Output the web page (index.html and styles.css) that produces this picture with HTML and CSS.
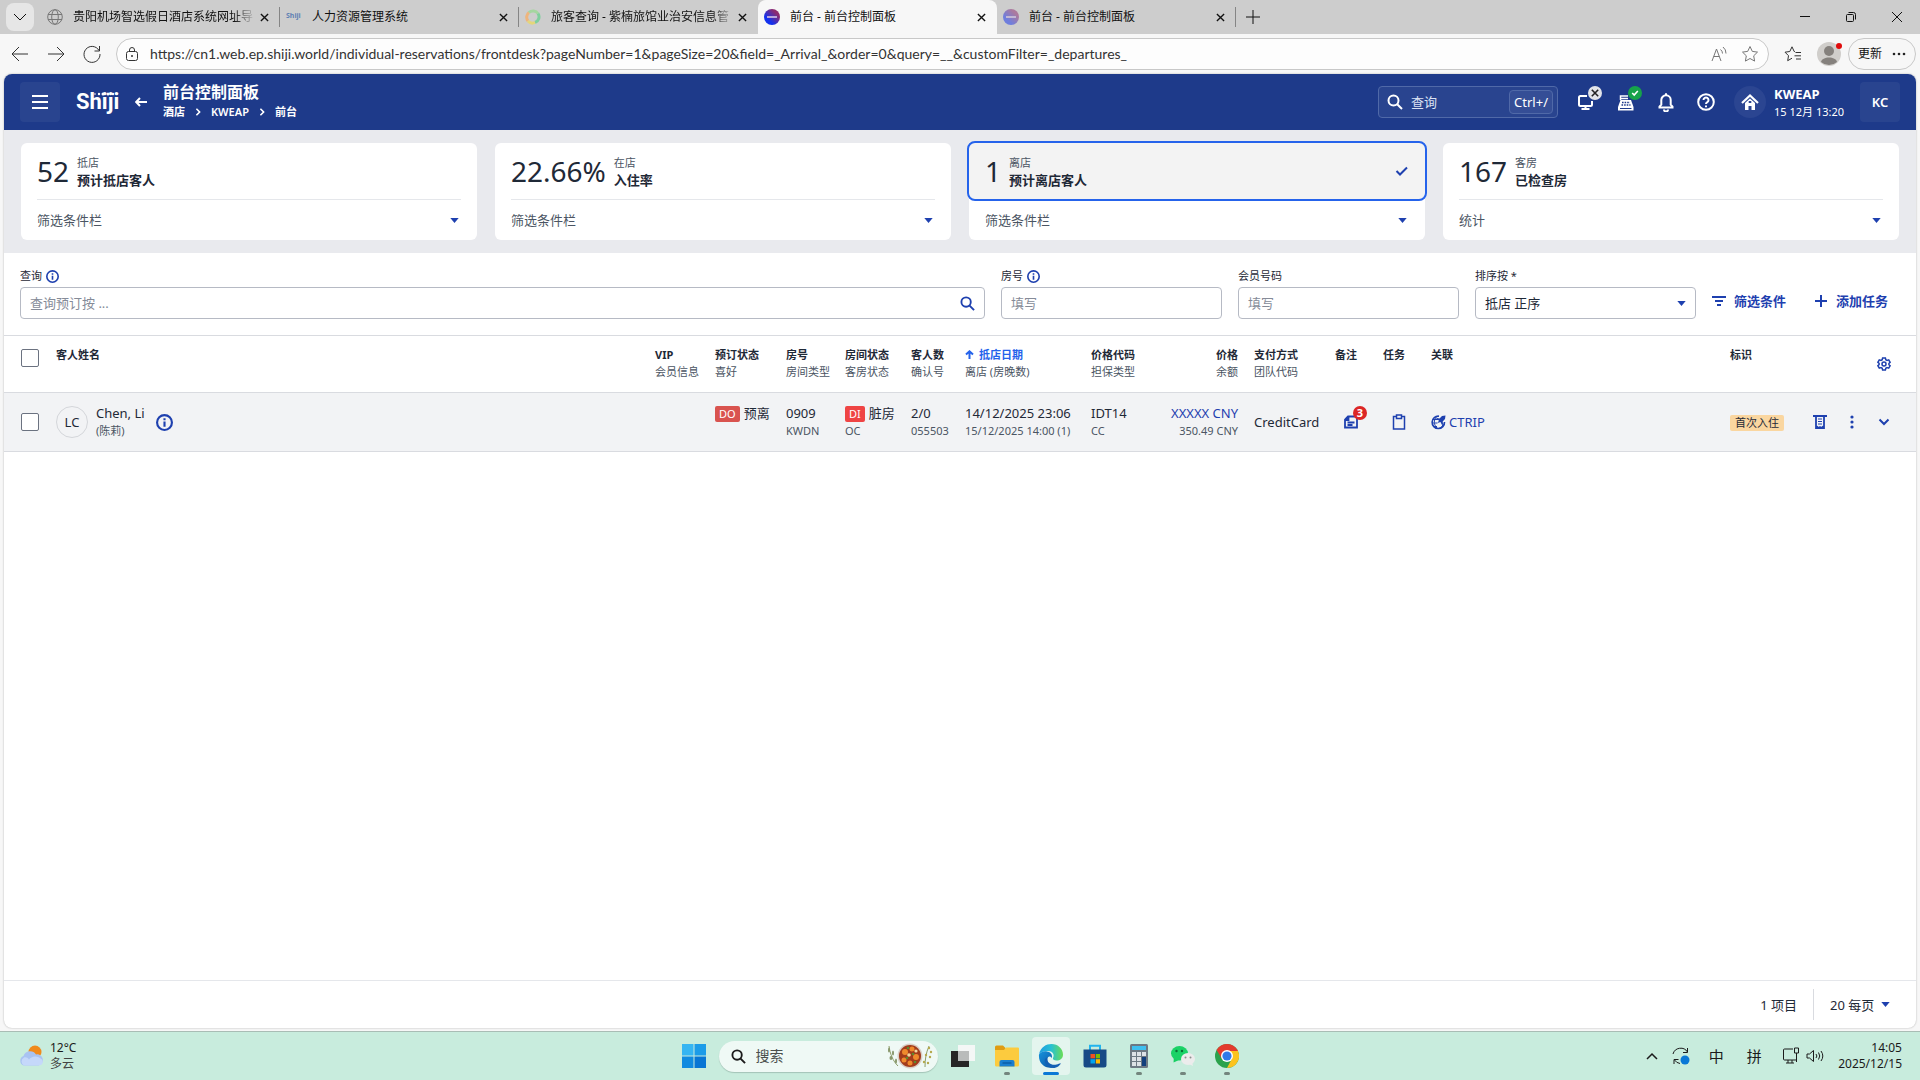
FILE: index.html
```html
<!DOCTYPE html>
<html lang="zh-CN">
<head>
  <meta charset="UTF-8" />
  <title>前台 - 前台控制面板</title>
  <link rel="stylesheet" href="styles.css">
</head>
<body>
  <svg class="sprite" aria-hidden="true">
    <symbol id="i-close" viewBox="0 0 10 10"><path d="M1 1l8 8M9 1L1 9" /></symbol>
    <symbol id="i-caret" viewBox="0 0 10 6"><path d="M0 0h10L5 6z" /></symbol>
    <symbol id="i-info" viewBox="0 0 16 16"><circle cx="8" cy="8" r="7" /><path d="M8 7v5M8 4v1.800" /></symbol>
    <symbol id="i-search" viewBox="0 0 16 16"><circle cx="6.500" cy="6.500" r="5" /><path d="M10.200 10.200l4.800 4.800" /></symbol>
    <symbol id="i-chevron" viewBox="0 0 6 10"><path d="M1 1l4 4-4 4" /></symbol>
  </svg>

  <!-- browser -->
  <div class="tabbar">
    <button class="tab-list" aria-label="标签页"><svg width="14" height="8" viewBox="0 0 14 8"><path d="M1 1l6 6 6-6" /></svg></button>
    <div class="tab">
      <svg class="favicon globe" viewBox="0 0 16 16"><circle cx="8" cy="8" r="7.300" /><ellipse cx="8" cy="8" rx="3.300" ry="7.300" /><path d="M1 5.500h14M1 10.500h14" /></svg>
      <span class="tab-title faded">贵阳机场智选假日酒店系统网址导</span>
      <button class="tab-close" aria-label="关闭"><svg><use href="#i-close" /></svg></button>
    </div>
    <div class="tab">
      <span class="favicon favicon-text">Shiji</span>
      <span class="tab-title">人力资源管理系统</span>
      <button class="tab-close" aria-label="关闭"><svg><use href="#i-close" /></svg></button>
    </div>
    <div class="tab last">
      <svg class="favicon" viewBox="0 0 16 16" fill="none" stroke-width="3"><path d="M3 12a6 6 0 0 1 1-8.500" stroke="#efb57c" /><path d="M4 3.500a6 6 0 0 1 9 1" stroke="#a5d6a0" /><path d="M13 4.500a6 6 0 0 1-3 9" stroke="#7fcf9d" /><path d="M10 13.500a6 6 0 0 1-7-1.500" stroke="#e5d67b" /></svg>
      <span class="tab-title faded">旅客查询 - 紫楠旅馆业治安信息管</span>
      <button class="tab-close" aria-label="关闭"><svg><use href="#i-close" /></svg></button>
    </div>
    <div class="tab active">
      <span class="favicon orb"></span>
      <span class="tab-title">前台 - 前台控制面板</span>
      <button class="tab-close" aria-label="关闭"><svg><use href="#i-close" /></svg></button>
    </div>
    <div class="tab">
      <span class="favicon orb dim"></span>
      <span class="tab-title">前台 - 前台控制面板</span>
      <button class="tab-close" aria-label="关闭"><svg><use href="#i-close" /></svg></button>
    </div>
    <button class="new-tab" aria-label="新标签页"><svg width="14" height="14" viewBox="0 0 14 14"><path d="M7 0v14M0 7h14" /></svg></button>
    <div class="window-buttons">
      <button aria-label="最小化"><svg width="12" height="12" viewBox="0 0 12 12"><path d="M1 5.500h10" /></svg></button>
      <button aria-label="还原"><svg width="12" height="12" viewBox="0 0 12 12"><rect x="1.500" y="3.500" width="7" height="7" rx="1" /><path d="M3.500 1.500h5a2 2 0 0 1 2 2v5" /></svg></button>
      <button aria-label="关闭"><svg width="12" height="12" viewBox="0 0 12 12"><path d="M1 1l10 10M11 1L1 11" /></svg></button>
    </div>
  </div>

  <div class="toolbar">
    <button class="nav-btn" aria-label="后退"><svg width="18" height="16" viewBox="0 0 18 16"><path d="M17 8H1M8 1L1 8l7 7" /></svg></button>
    <button class="nav-btn" aria-label="前进"><svg width="18" height="16" viewBox="0 0 18 16"><path d="M1 8h16M10 1l7 7-7 7" /></svg></button>
    <button class="nav-btn" aria-label="刷新"><svg width="18" height="18" viewBox="0 0 18 18"><path d="M16 5.500A8 8 0 1 0 17 9M16.500 1v5h-5" /></svg></button>
    <div class="address">
      <svg width="16" height="16" viewBox="0 0 16 16"><rect x="2.500" y="5.500" width="11" height="9" rx="2" /><path d="M5.500 5.500V4a2.500 2.500 0 0 1 5 0v1.500" /><circle cx="8" cy="10" r="1" fill="#333" stroke="none" /></svg>
      <input type="text" aria-label="地址" value="https://cn1.web.ep.shiji.world/individual-reservations/frontdesk?pageNumber=1&amp;pageSize=20&amp;field=_Arrival_&amp;order=0&amp;query=__&amp;customFilter=_departures_">
      <button aria-label="朗读"><svg width="16" height="16" viewBox="0 0 16 16"><path d="M1 15L5.500 3 10 15M2.800 10.500h5.500M9.500 3.500a5 5 0 0 1 2 4M12 1a8 8 0 0 1 3 6.500" /></svg></button>
      <button aria-label="收藏"><svg width="18" height="18" viewBox="0 0 18 18"><path d="M9 1.500l2.300 4.900 5.200.7-3.800 3.700.9 5.300L9 13.500l-4.600 2.600.9-5.300L1.500 7.100l5.200-.7z" /></svg></button>
    </div>
    <button class="fav-btn" aria-label="收藏夹"><svg width="18" height="18" viewBox="0 0 18 18"><path d="M11 6.500h-.800L8 1.800 5.800 6.500 1 7.200l3.500 3.500-.8 5L8 13.200M11.500 7.500H17M10.500 10.800H17M12 14h5" /></svg></button>
    <button class="profile" aria-label="个人资料">
      <svg width="24" height="24" viewBox="0 0 24 24"><circle cx="12" cy="12" r="12" fill="#d0cecb" /><circle cx="12" cy="9" r="5" fill="#85817d" /><path d="M4 20c1-6 15-6 16 0a12 12 0 0 1-16 0z" fill="#85817d" /></svg>
      <span class="profile-dot"></span>
    </button>
    <button class="update-btn">更新 <svg width="14" height="4" viewBox="0 0 14 4"><circle cx="2" cy="2" r="1.300" /><circle cx="7" cy="2" r="1.300" /><circle cx="12" cy="2" r="1.300" /></svg></button>
  </div>

  <!-- application -->
  <main class="app">
    <header class="app-header">
      <button class="square-btn" aria-label="菜单"><svg width="18" height="16" viewBox="0 0 18 16"><path d="M1 2h16M1 8h16M1 14h16" /></svg></button>
      <a href="#" class="logo">Shiji<svg class="logo-dots" width="26" height="4" viewBox="0 0 26 4"><circle cx="2" cy="2" r="0.800" /><circle cx="6" cy="2" r="1.200" /><circle cx="10" cy="2" r="1.500" /><circle cx="15" cy="2" r="1.500" /><circle cx="20" cy="2" r="1.200" /><circle cx="24" cy="2" r="0.800" /></svg></a>
      <a href="#" class="back" aria-label="返回"><svg width="12" height="10" viewBox="0 0 12 10"><path d="M12 5H1.500M5 1L1.200 5 5 9" /></svg></a>
      <div class="heading">
        <h1>前台控制面板</h1>
        <nav class="crumbs">
          <a href="#">酒店</a>
          <svg><use href="#i-chevron" /></svg>
          <a href="#">KWEAP</a>
          <svg><use href="#i-chevron" /></svg>
          <a href="#">前台</a>
        </nav>
      </div>
      <label class="global-search">
        <svg><use href="#i-search" /></svg>
        <input type="text" placeholder="查询" aria-label="查询">
        <kbd>Ctrl+/</kbd>
      </label>
      <div class="header-icons">
        <button aria-label="设备"><svg width="18" height="18" viewBox="0 0 18 18"><path d="M10 3H3.500A1.500 1.500 0 0 0 2 4.500v7A1.500 1.500 0 0 0 3.500 13h10a1.500 1.500 0 0 0 1.500-1.500V8M8.500 13v3M4.500 16h8" /></svg><span class="status off"><svg><use href="#i-close" /></svg></span></button>
        <button aria-label="收银"><svg width="18" height="18" viewBox="0 0 18 18"><path d="M3.500 7V3H11M4 5.500h7" stroke-width="1.500" /><path d="M3.500 7h10.500l2.500 7v3.500H1V14z" fill="#fff" stroke="none" /><path d="M5 9.500h8M4.500 12h9" stroke="#1e3a8a" stroke-width="1.300" stroke-dasharray="1.600 1" /><path d="M3 15.500h11.500" stroke="#1e3a8a" stroke-width="1" /></svg><span class="status on"><svg viewBox="0 0 10 10"><path d="M1.500 5l2.500 2.500 4.500-5" /></svg></span></button>
        <button aria-label="通知"><svg width="18" height="20" viewBox="0 0 18 20"><path d="M2.500 15.500v-.8l1.800-2V8a4.700 4.700 0 0 1 9.400 0v4.700l1.800 2v.8zM9 3V1.200" /><path d="M7 17.500a2 2 0 0 0 4 0" /></svg></button>
        <button aria-label="帮助"><svg width="18" height="18" viewBox="0 0 18 18"><circle cx="9" cy="9" r="7.800" /><path d="M6.500 7a2.500 2.500 0 1 1 3.800 2.200c-.9.500-1.300 1-1.300 1.800M9 12.500v1.800" /></svg></button>
      </div>
      <span class="home"><svg width="18" height="18" viewBox="0 0 18 18"><path d="M1 10l8-7.500L17 10" stroke="#fff" stroke-width="2.200" /><path d="M9 5.500L4 10v7h3.500v-4h3v4H14v-7z" fill="#fff" /><path d="M7.700 9h2.600" stroke="#2b4591" stroke-width="2" /></svg></span>
      <div class="property">
        <strong>KWEAP</strong>
        <span>15 12月 13:20</span>
      </div>
      <button class="square-btn user">KC</button>
    </header>

    <section class="cards">
      <article class="card">
        <button class="card-main">
          <span class="number">52</span>
          <span class="card-text"><small>抵店</small><strong>预计抵店客人</strong></span>
        </button>
        <button class="card-filter">筛选条件栏<svg class="caret"><use href="#i-caret" /></svg></button>
      </article>
      <article class="card">
        <button class="card-main">
          <span class="number">22.66%</span>
          <span class="card-text"><small>在店</small><strong>入住率</strong></span>
        </button>
        <button class="card-filter">筛选条件栏<svg class="caret"><use href="#i-caret" /></svg></button>
      </article>
      <article class="card selected">
        <button class="card-main">
          <span class="number">1</span>
          <span class="card-text"><small>离店</small><strong>预计离店客人</strong></span>
          <svg class="tick" width="14" height="10" viewBox="0 0 14 10"><path d="M1.500 5l3.500 3.500 7-7" /></svg>
        </button>
        <button class="card-filter">筛选条件栏<svg class="caret"><use href="#i-caret" /></svg></button>
      </article>
      <article class="card">
        <button class="card-main">
          <span class="number">167</span>
          <span class="card-text"><small>客房</small><strong>已检查房</strong></span>
        </button>
        <button class="card-filter">统计<svg class="caret"><use href="#i-caret" /></svg></button>
      </article>
    </section>

    <form class="filters">
      <div class="field wide">
        <label for="q">查询 <svg class="info"><use href="#i-info" /></svg></label>
        <div class="control"><input type="text" id="q" placeholder="查询预订按 ..."><svg class="search-icon"><use href="#i-search" /></svg></div>
      </div>
      <div class="field">
        <label for="room">房号 <svg class="info"><use href="#i-info" /></svg></label>
        <div class="control"><input type="text" id="room" placeholder="填写"></div>
      </div>
      <div class="field">
        <label for="member">会员号码</label>
        <div class="control"><input type="text" id="member" placeholder="填写"></div>
      </div>
      <div class="field">
        <label for="sort">排序按 *</label>
        <div class="control"><select id="sort"><option>抵店 正序</option></select><svg class="caret"><use href="#i-caret" /></svg></div>
      </div>
      <div class="filter-actions">
        <button type="button" class="link-btn"><svg width="14" height="10" viewBox="0 0 14 10"><path d="M0 1h14M3 5h8M5 9h4" /></svg>筛选条件</button>
        <button type="button" class="link-btn"><svg width="14" height="14" viewBox="0 0 14 14"><path d="M7 1v12M1 7h12" /></svg>添加任务</button>
      </div>
    </form>

    <div class="table-area">
      <table>
        <colgroup>
          <col class="c-check"><col><col class="c-vip"><col class="c-status"><col class="c-room"><col class="c-house"><col class="c-guests"><col class="c-dates"><col class="c-rate"><col class="c-price"><col class="c-pay"><col class="c-icon"><col class="c-icon"><col class="c-linked"><col class="c-flag"><col class="c-actions">
        </colgroup>
        <thead>
          <tr>
            <th><input type="checkbox" aria-label="全选"></th>
            <th>客人姓名</th>
            <th>VIP<small>会员信息</small></th>
            <th>预订状态<small>喜好</small></th>
            <th>房号<small>房间类型</small></th>
            <th>房间状态<small>客房状态</small></th>
            <th>客人数<small>确认号</small></th>
            <th><span class="sorted"><svg width="9" height="9" viewBox="0 0 9 9"><path d="M4.500 9V1.500M1 4.500l3.500-3.200L8 4.500" /></svg>抵店日期</span><small>离店 (房晚数)</small></th>
            <th>价格代码<small>担保类型</small></th>
            <th class="right">价格<small>余额</small></th>
            <th>支付方式<small>团队代码</small></th>
            <th>备注</th>
            <th>任务</th>
            <th>关联</th>
            <th>标识</th>
            <th class="settings"><button class="icon-btn" aria-label="设置"><svg width="14" height="14" viewBox="0 0 14 14"><path d="M5.600 1h2.800l.4 1.700 1.200.7 1.700-.5 1.400 2.400L11.900 6.500v1.200l1.200 1.100-1.400 2.300-1.700-.5-1.200.7L8.400 13H5.600l-.4-1.700-1.200-.7-1.700.5L.9 8.700l1.200-1.100V6.400L.9 5.300l1.400-2.400 1.700.5 1.200-.7z" /><circle cx="7" cy="7" r="2" /></svg></button></th>
          </tr>
        </thead>
        <tbody>
          <tr>
            <td><input type="checkbox" aria-label="选择 Chen, Li"></td>
            <td>
              <div class="guest">
                <span class="avatar">LC</span>
                <span>Chen, Li<small>(陈莉)</small></span>
                <svg class="info"><use href="#i-info" /></svg>
              </div>
            </td>
            <td></td>
            <td><span class="badge do">DO</span>预离<small>&nbsp;</small></td>
            <td>0909<small>KWDN</small></td>
            <td><span class="badge di">DI</span>脏房<small>OC</small></td>
            <td>2/0<small>055503</small></td>
            <td>14/12/2025 23:06<small>15/12/2025 14:00 (1)</small></td>
            <td>IDT14<small>CC</small></td>
            <td class="right"><a href="#">XXXXX CNY</a><small>350.49 CNY</small></td>
            <td>CreditCard</td>
            <td><button class="icon-btn" aria-label="备注 3"><svg width="16" height="16" viewBox="0 0 16 16"><path d="M5 2.500h9v11H2v-8zM2 6h3.500V2.500M4.500 8.500h7M4.500 11h5" stroke-width="1.800" /></svg><span class="count">3</span></button></td>
            <td><button class="icon-btn" aria-label="任务"><svg width="14" height="18" viewBox="0 0 14 18"><path d="M1.500 3.500h11v12.500h-11z" /><path d="M4.500 2h5v3.500h-5z" fill="#f2f3f5" /></svg></button></td>
            <td><a href="#" class="company"><svg width="15" height="15" viewBox="0 0 15 15"><path d="M13.500 7A6.200 6.200 0 1 1 8 1.200" stroke-width="1.600" /><path d="M2 4.500h5M1.500 8h5M3 11.500h3M5.500 1.800c-3 4-3 7 .5 11.500M8 13.500c3-1 4-3 4-5" /><path d="M14.500.5L11 1 8.500 3.500 6 3l-1 1 3 1.500L6.500 8l3-1 1.500 3 1-1-.3-2.500L14 4z" fill="#1e40af" stroke="none" /></svg>CTRIP</a></td>
            <td><span class="tag">首次入住</span></td>
            <td>
              <div class="row-actions">
                <button class="icon-btn" aria-label="账单"><svg width="14" height="14" viewBox="0 0 14 14"><path d="M0 1h14M3 1v12l1.300-1 1.300 1L7 12l1.400 1 1.300-1 1.300 1V1" stroke-width="1.800" /><path d="M5 4h4M5 6.500h4M5 9h4" stroke-width="1" /></svg></button>
                <button class="icon-btn" aria-label="更多"><svg width="4" height="14" viewBox="0 0 4 14"><g fill="#1e40af" stroke="none"><circle cx="2" cy="2" r="1.600" /><circle cx="2" cy="7" r="1.600" /><circle cx="2" cy="12" r="1.600" /></g></svg></button>
                <button class="icon-btn" aria-label="展开"><svg width="12" height="8" viewBox="0 0 12 8"><path d="M1.500 1.500L6 6l4.500-4.500" stroke-width="2" /></svg></button>
              </div>
            </td>
          </tr>
        </tbody>
      </table>
    </div>

    <footer class="pager">
      <span>1 项目</span>
      <label class="page-size"><select aria-label="每页项目"><option>20 每页</option></select><svg class="caret"><use href="#i-caret" /></svg></label>
    </footer>
  </main>

  <!-- windows taskbar -->
  <div class="taskbar">
    <div class="weather">
      <svg width="26" height="22" viewBox="0 0 26 22"><circle cx="17" cy="7" r="6.500" fill="#f08a1c" /><path d="M6 20.500a5 5 0 0 1-.5-9.500A7 7 0 0 1 18 9.500a5.500 5.500 0 0 1 2.500 11z" fill="#a9c3f2" /><path d="M6 20.500a4.500 4.500 0 0 1 0-8c2-.5 4 .5 5 2 2-3 8-5 13 0 2 3 0 6-3.500 6z" fill="#c5d8fa" /></svg>
      <span>12°C<small>多云</small></span>
    </div>
    <div class="dock">
      <button class="app-icon" aria-label="开始"><svg width="24" height="24" viewBox="0 0 24 24"><path d="M0 0h11.500v11.500H0z" fill="#36b5f2" /><path d="M12.500 0H24v11.500H12.500z" fill="#1c9ce8" /><path d="M0 12.500h11.500V24H0z" fill="#118be0" /><path d="M12.500 12.500H24V24H12.500z" fill="#0876d4" /></svg></button>
      <label class="task-search">
        <svg><use href="#i-search" /></svg>
        <input type="text" placeholder="搜索" aria-label="搜索">
        <span class="food"><svg width="46" height="26" viewBox="0 0 46 26"><g fill="none" stroke="#8c9d68" stroke-width="1"><path d="M2 3c1 8 4 15 9 20M38 24c0-8 1-14 4-21" /></g><g fill="#87966a"><ellipse cx="2" cy="7" rx="1" ry="2.500" /><ellipse cx="6" cy="10" rx="1" ry="2.500" /><ellipse cx="4" cy="15" rx="1.500" ry="2" /><ellipse cx="9" cy="18" rx="1" ry="2.500" /></g><g fill="#b5a84c"><circle cx="42" cy="5" r="1.200" /><circle cx="44" cy="9" r="1.200" /><circle cx="39" cy="12" r="1.200" /><circle cx="43" cy="14" r="1.200" /><circle cx="37" cy="19" r="1.200" /><circle cx="41" cy="20" r="1.200" /></g><circle cx="23" cy="13" r="12.500" fill="#d9cfc6" /><circle cx="23" cy="13" r="11" fill="#a23c1b" /><g fill="#ef8a2c"><circle cx="18" cy="9" r="3" /><circle cx="25" cy="6" r="2.500" /><circle cx="17" cy="17" r="2.500" /><circle cx="29" cy="14" r="3" /><circle cx="23" cy="20" r="2.500" /></g><g fill="#f4d9a0"><circle cx="22" cy="12" r="1.800" /><circle cx="29" cy="8" r="1.600" /></g><g fill="#5c8a2e"><circle cx="21" cy="5" r="1.300" /><circle cx="26" cy="11" r="1.300" /><circle cx="20" cy="15" r="1.300" /><circle cx="28" cy="19" r="1.300" /></g></svg></span>
      </label>
      <button class="app-icon" aria-label="任务视图"><svg width="24" height="24" viewBox="0 0 24 24"><path d="M0 7h18v16H0z" fill="#262626" /><path d="M7 1h17v16H7z" fill="#f4f7f6" /><path d="M7 7h11v10H7z" fill="#b9bcbb" /></svg></button>
      <button class="app-icon running" aria-label="文件资源管理器"><svg width="24" height="24" viewBox="0 0 24 24"><path d="M0 3a1.500 1.500 0 0 1 1.500-1.500H8L10.500 4v4H0z" fill="#e09c12" /><path d="M0 6h9l2-2.500h12a1 1 0 0 1 1 1V21a1.500 1.500 0 0 1-1.500 1.500h-21A1.500 1.500 0 0 1 0 21z" fill="#fccb3e" /><path d="M4.500 22.500V18A2 2 0 0 1 6.500 16h11a2 2 0 0 1 2 2v4.500z" fill="#1a7fd0" /><path d="M7.500 19h9" stroke="#0b5ea8" stroke-width="1.500" /></svg></button>
      <button class="app-icon current" aria-label="Edge"><svg width="26" height="26" viewBox="0 0 26 26">
        <defs>
          <linearGradient id="edgeTop"><stop offset="0" stop-color="#1e9be0" /><stop offset=".5" stop-color="#27c0d4" /><stop offset="1" stop-color="#6bdd54" /></linearGradient>
          <linearGradient id="edgeLow" x2="1" y2="1"><stop offset="0" stop-color="#1793dc" /><stop offset="1" stop-color="#0b4fa0" /></linearGradient>
        </defs>
        <path d="M1 11C3 4 8 1 13.500 1 20 1 25 6 25 11.500c0 4-3 6-6.500 6-2.500 0-4-1-3.500-2.500 2-3.500-.5-7-5-7C6 8 3 9 1 11z" fill="url(#edgeTop)" />
        <path d="M1 11.500C3 8.500 6.500 8 9 8.500c4 .5 6 4 4.500 6.500-1.500-3-5-1-4 3s5 6 8.500 5.200C10 27.500 0 22 1 11.500z" fill="url(#edgeLow)" />
        <path d="M9.500 14c-1.500 5 3.500 9 9 7.500 1.800-.6 3.500-1.500 4-1.300.5.300 0 1.500-2 3-4 3-10 2-12.500-2s-1-6 1.500-7.200z" fill="#1460b4" />
      </svg></button>
      <button class="app-icon" aria-label="Microsoft Store"><svg width="24" height="24" viewBox="0 0 24 24"><path d="M7 6V1.800h10V6" fill="none" stroke="#22b4ee" stroke-width="2" /><path d="M.5 5.500h23V21a2.500 2.500 0 0 1-2.500 2.500H3A2.500 2.500 0 0 1 .5 21z" fill="#174a86" /><path d="M7.500 10H12v4.300H7.500z" fill="#f25022" /><path d="M12.800 10H17v4.300h-4.200z" fill="#7fba00" /><path d="M7.500 15.200H12v4.300H7.500z" fill="#00a4ef" /><path d="M12.800 15.200H17v4.300h-4.200z" fill="#ffb900" /></svg></button>
      <button class="app-icon running" aria-label="计算器"><svg width="24" height="24" viewBox="0 0 24 24"><rect x="3" width="18" height="24" rx="1.500" fill="#6d7983" /><path d="M5 2h14v4H5z" fill="#3fc0ef" /><g fill="#dde2e6"><path d="M5 8h4v4H5zM10 8h4v4h-4zM15 8h4v4h-4zM5 13h4v4H5zM10 13h4v4h-4zM5 18h4v4H5zM10 18h4v4h-4z" /></g><path d="M15 13h4v9h-4z" fill="#123f7c" /></svg></button>
      <button class="app-icon running" aria-label="微信"><svg width="24" height="24" viewBox="0 0 24 24"><path d="M3 12l-.5 6.500L8 16z" fill="#17cf63" /><ellipse cx="8.500" cy="9.300" rx="8.500" ry="7.300" fill="#1bd267" /><circle cx="5.500" cy="7" r="1.200" fill="#0a6e36" /><circle cx="11" cy="7" r="1.200" fill="#0a6e36" /><ellipse cx="17" cy="15" rx="7" ry="6" fill="#ececec" /><path d="M18 20l4 2-1-4z" fill="#ececec" /><circle cx="14.500" cy="13.500" r="1" fill="#8d8d8d" /><circle cx="19.500" cy="13.500" r="1" fill="#8d8d8d" /></svg></button>
      <button class="app-icon running" aria-label="Chrome"><svg width="24" height="24" viewBox="0 0 24 24"><circle cx="12" cy="12" r="12" fill="#2ba24c" /><path d="M22.400 6A12 12 0 0 1 12 24l5-9.500L12 6z" fill="#fcc31e" /><path d="M1.600 6L7 15l5-8h10.900L22.400 6A12 12 0 0 0 1.600 6z" fill="#e33b2e" /><circle cx="12" cy="12" r="6" fill="#fff" /><circle cx="12" cy="12" r="4.600" fill="#2f79ea" /></svg></button>
    </div>
    <div class="tray">
      <svg width="12" height="8" viewBox="0 0 12 8"><path d="M1 7l5-5 5 5" stroke-width="1.500" /></svg>
      <svg width="18" height="18" viewBox="0 0 18 18"><path d="M1 7a8 8 0 0 1 14.500-2M15.500 1v4.500H11M2 17v-4.500h4.500M2.500 13A8 8 0 0 0 8 16.500" /><circle cx="13" cy="13" r="4.500" fill="#0a78d6" stroke="none" /></svg>
      <span class="ime">中</span>
      <span class="ime">拼</span>
      <span class="devices">
        <svg width="18" height="18" viewBox="0 0 18 18"><path d="M11 2H2.500a1 1 0 0 0-1 1v9a1 1 0 0 0 1 1h11a1 1 0 0 0 1-1v-2M6 13v3M10 13v3M4 16h8M12.500 1h4v5h-4zM14.500 6v9" /></svg>
        <svg width="18" height="14" viewBox="0 0 18 14"><path d="M1 5h2.500L7.500 1.500v11L3.500 9H1zM10 5a3 3 0 0 1 0 4M12.500 3.500a6 6 0 0 1 0 7M15 2a8.500 8.500 0 0 1 0 10" /></svg>
      </span>
      <time>14:05<br>2025/12/15</time>
    </div>
  </div>
</body>
</html>
```
FILE: styles.css
```css
:root {
  --navy: #1e3a8a;
  --blue: #1e40af;
  --bright: #2563eb;
  --text: #1f2937;
  --muted: #4b5563;
  --line: #d9dbe0;
  --chrome: #f7f7f7;
}

*, *::before, *::after {
  box-sizing: border-box;
}

body {
  margin: 0;
  min-height: 100vh;
  display: flex;
  flex-direction: column;
  background-color: var(--chrome);
  color: var(--text);
  font-family: "Noto Sans", "Noto Sans CJK SC", sans-serif;
  font-size: 13px;
  line-height: 18px;
}

button, input, select {
  font: inherit;
  color: inherit;
  border: none;
  background: none;
  padding: 0;
  margin: 0;
}

button {
  cursor: pointer;
  position: relative;
  display: flex;
  align-items: center;
  justify-content: center;
}

a {
  color: var(--blue);
  text-decoration: none;
}

svg {
  display: block;
  flex: none;
  fill: none;
  stroke: currentColor;
}

small {
  display: block;
  font-size: 11px;
  font-weight: 400;
}

.sprite {
  position: absolute;
  width: 0;
  height: 0;
}

.caret {
  width: 9px;
  height: 5px;
  fill: var(--blue);
  stroke: none;
}

.info {
  width: 13px;
  height: 13px;
  color: var(--blue);
  stroke-width: 2;
}

/* browser tabs */
.tabbar {
  display: flex;
  align-items: center;
  height: 34px;
  padding-left: 6px;
  background-color: #cdcdcd;
  color: #111;
  font-size: 12px;
}

.tab-list {
  width: 28px;
  height: 28px;
  margin-right: 7px;
  border-radius: 8px;
  background-color: #e6e6e6;
}

.tab {
  display: flex;
  align-items: center;
  width: 239px;
  height: 34px;
  padding: 0 8px 0 6px;
  position: relative;
}

.tab::after {
  content: "";
  position: absolute;
  right: 0;
  top: 7px;
  height: 20px;
  border-right: 1px solid #858585;
}

.tab.last::after, .tab.active::after {
  display: none;
}

.tab.active {
  background-color: var(--chrome);
  border-radius: 8px 8px 0 0;
}

.favicon {
  width: 16px;
  height: 16px;
  margin-right: 10px;
  flex: none;
}

.globe {
  color: #777;
}

.favicon-text {
  color: #5f80b4;
  font-size: 7px;
  font-weight: 700;
  line-height: 14px;
}

.orb {
  border-radius: 50%;
  background: linear-gradient(45deg, #1331ee 30%, #8c2a70 75%);
  display: flex;
  align-items: center;
  justify-content: center;
}

.orb::after {
  content: "";
  width: 10px;
  height: 2px;
  background-color: #b9a5dc;
}

.orb.dim {
  opacity: 0.5;
}

.tab-title {
  flex: 1;
  white-space: nowrap;
}

.tab-title.faded {
  -webkit-mask-image: linear-gradient(to right, #000 88%, transparent);
  mask-image: linear-gradient(to right, #000 88%, transparent);
}

.tab-close {
  width: 16px;
  height: 16px;
}

.tab-close svg {
  width: 9px;
  height: 9px;
  stroke-width: 1.5;
}

.new-tab {
  width: 34px;
  height: 28px;
}

.window-buttons {
  display: flex;
  margin-left: auto;
}

.window-buttons button {
  width: 46px;
  height: 34px;
}

/* browser toolbar */
.toolbar {
  display: flex;
  align-items: center;
  height: 40px;
  padding: 0 4px 0 2px;
  color: #333;
}

.nav-btn {
  width: 36px;
  height: 32px;
}

.address {
  flex: 1;
  display: flex;
  align-items: center;
  gap: 14px;
  height: 32px;
  margin-left: 6px;
  padding: 0 9px 0 7px;
  border: 1px solid #c8c8c8;
  border-radius: 16px;
  background-color: #fdfdfd;
}

.address input {
  flex: 1;
  margin-left: -4px;
  color: #333;
  font-family: Lato, "Open Sans", sans-serif;
  font-size: 14px;
}

.address button {
  color: #777;
}

.fav-btn {
  width: 48px;
  height: 32px;
}

.profile svg {
  stroke: none;
}

.profile-dot {
  position: absolute;
  top: 1px;
  right: -1px;
  width: 6px;
  height: 6px;
  border-radius: 50%;
  background-color: #e00b0b;
}

.update-btn {
  gap: 10px;
  width: 68px;
  height: 32px;
  margin-left: 7px;
  border: 1px solid #c8c8c8;
  border-radius: 16px;
  font-size: 12px;
  color: #111;
}

.update-btn svg {
  fill: #222;
  stroke: none;
}

/* app shell */
.app {
  flex: 1;
  display: flex;
  flex-direction: column;
  margin: 0 4px 3px;
  border-radius: 8px;
  overflow: hidden;
  background-color: #fff;
  box-shadow: 0 0 2px rgba(0, 0, 0, 0.3);
}

.app-header {
  display: flex;
  align-items: center;
  height: 56px;
  padding: 0 16px;
  background-color: var(--navy);
  color: #fff;
}

.app-header a {
  color: #fff;
}

.square-btn {
  width: 40px;
  height: 40px;
  border-radius: 4px;
  background-color: rgba(255, 255, 255, 0.05);
  stroke-width: 2;
}

.logo {
  position: relative;
  width: 43px;
  margin: 0 16px;
  font-family: Roboto, "Open Sans", sans-serif;
  font-size: 22px;
  line-height: 28px;
  font-weight: 700;
}

.logo-dots {
  position: absolute;
  top: 4px;
  right: 0;
  fill: #fff;
  stroke: none;
}

.back {
  stroke-width: 2;
}

.heading {
  margin-left: 16px;
}

.heading h1 {
  margin: 0;
  font-size: 16px;
  line-height: 20px;
}

.crumbs {
  display: flex;
  align-items: center;
  gap: 10px;
  font-size: 11px;
  font-weight: 600;
  line-height: 20px;
}

.crumbs svg {
  width: 6px;
  height: 8px;
  stroke-width: 2;
}

.global-search {
  display: flex;
  align-items: center;
  gap: 8px;
  width: 180px;
  height: 32px;
  margin-left: auto;
  padding: 0 4px 0 8px;
  border: 1px solid #5069a8;
  border-radius: 4px;
  background-color: #29448f;
}

.global-search svg {
  width: 16px;
  height: 16px;
  stroke-width: 2;
}

.global-search input {
  flex: 1;
  min-width: 0;
}

.global-search input::placeholder {
  color: #dbe2f3;
  opacity: 1;
}

kbd {
  padding: 2px 4px;
  border: 1px solid #5069a8;
  border-radius: 4px;
  background-color: #354e96;
  font-family: inherit;
}

.header-icons {
  display: flex;
  margin-left: 8px;
}

.header-icons button {
  width: 40px;
  height: 40px;
  stroke-width: 2;
}

.status {
  position: absolute;
  top: 4px;
  right: 4px;
  width: 14px;
  height: 14px;
  display: flex;
  align-items: center;
  justify-content: center;
  border-radius: 50%;
}

.status svg {
  width: 8px;
  height: 8px;
}

.status.off {
  background-color: #e2e4e9;
  color: #222;
}

.status.on {
  background-color: #16a34a;
}

.home {
  display: flex;
  align-items: center;
  justify-content: center;
  width: 32px;
  height: 32px;
  margin-left: 8px;
  border-radius: 50%;
  background-color: #2b4591;
}

.home svg {
  stroke: none;
}

.property {
  width: 86px;
  margin-left: 8px;
  padding-top: 2px;
}

.property strong, .property span {
  display: block;
  white-space: nowrap;
}

.property span {
  font-size: 11px;
}

.user {
  font-weight: 600;
}

/* summary cards */
.cards {
  display: grid;
  grid-template-columns: repeat(4, 1fr);
  gap: 18px;
  padding: 13px 17px;
  background-color: #e9eaee;
}

.card {
  border-radius: 6px;
  background-color: #fff;
}

.card-main {
  width: 100%;
  height: 56px;
  padding: 0 16px;
  justify-content: flex-start;
  gap: 8px;
  text-align: left;
}

.number {
  font-size: 28px;
  line-height: 36px;
}

.card-text {
  padding-top: 1px;
}

.card-text strong {
  display: block;
  line-height: 18px;
}

.card-text small {
  color: var(--muted);
  line-height: 16px;
}

.card-filter {
  justify-content: space-between;
  width: calc(100% - 32px);
  height: 41px;
  margin: 0 16px;
  padding-right: 2px;
  border-top: 1px solid #e5e7eb;
  color: var(--muted);
}

.selected .card-main {
  outline: 2px solid var(--bright);
  border-radius: 6px;
  background-color: #f3f3f3;
}

.selected .card-filter {
  border-top-color: transparent;
}

.tick {
  margin-left: auto;
  color: var(--blue);
  stroke-width: 2;
}

/* filters */
.filters {
  display: flex;
  align-items: flex-end;
  gap: 16px;
  padding: 13px 16px 16px;
  border-bottom: 1px solid var(--line);
}

.field {
  width: 221px;
}

.field.wide {
  flex: 1;
}

.field label {
  display: flex;
  align-items: center;
  gap: 4px;
  height: 20px;
  font-size: 11px;
}

.control {
  display: flex;
  align-items: center;
  height: 32px;
  margin-top: 1px;
  padding-right: 9px;
  border: 1px solid #b6bac4;
  border-radius: 4px;
}

.control input, .control select {
  flex: 1;
  height: 30px;
  padding-left: 9px;
  min-width: 0;
}

.control input::placeholder {
  color: #858b98;
  opacity: 1;
}

select {
  appearance: none;
}

.search-icon {
  width: 15px;
  height: 15px;
  color: var(--blue);
  stroke-width: 2;
}

.filter-actions {
  display: flex;
  gap: 28px;
  padding: 0 12px 2px 0;
}

.link-btn {
  gap: 8px;
  height: 32px;
  color: var(--blue);
  font-weight: 700;
  stroke-width: 2;
}

/* reservations */
.table-area {
  flex: 1;
}

table {
  width: 100%;
  table-layout: fixed;
  border-collapse: separate;
  border-spacing: 0;
}

.c-check { width: 52px; }
.c-vip { width: 60px; }
.c-status { width: 71px; }
.c-room { width: 59px; }
.c-house { width: 66px; }
.c-guests { width: 54px; }
.c-dates { width: 126px; }
.c-rate { width: 70px; }
.c-price { width: 93px; }
.c-pay { width: 81px; }
.c-icon { width: 48px; }
.c-linked { width: 299px; }
.c-flag { width: 74px; }
.c-actions { width: 112px; }

th, td {
  padding: 0;
  text-align: left;
  white-space: nowrap;
  border-bottom: 1px solid var(--line);
}

th {
  height: 57px;
  padding-top: 10px;
  vertical-align: top;
  font-size: 11px;
  line-height: 17px;
}

td {
  height: 59px;
  background-color: #f2f3f5;
}

th:first-child, td:first-child {
  padding-left: 17px;
}

th small, td small {
  color: var(--muted);
}

input[type="checkbox"] {
  appearance: none;
  display: block;
  width: 18px;
  height: 18px;
  border: 1px solid #6b7280;
  border-radius: 2px;
  background-color: #fff;
}

th input[type="checkbox"] {
  margin-top: 3px;
}

.right {
  padding-right: 16px;
  text-align: right;
}

.sorted {
  display: flex;
  align-items: center;
  gap: 5px;
  color: var(--bright);
  stroke-width: 2;
}

.icon-btn {
  width: 32px;
  height: 32px;
  color: var(--blue);
  stroke-width: 1.5;
}

th.settings {
  padding: 0 0 0 64px;
  vertical-align: middle;
}

.guest {
  display: flex;
  align-items: center;
  gap: 8px;
}

.guest .info {
  width: 17px;
  height: 17px;
  margin-left: 3px;
}

.avatar {
  display: flex;
  align-items: center;
  justify-content: center;
  width: 32px;
  height: 32px;
  border: 1px solid #d4d6da;
  border-radius: 50%;
}

.badge {
  display: inline-block;
  height: 16px;
  margin-right: 4px;
  padding: 0 4px;
  border-radius: 2px;
  color: #fff;
  font-size: 11px;
  line-height: 16px;
}

.badge.do {
  background-color: #d9534f;
}

.badge.di {
  background-color: #ef4444;
}

.count {
  position: absolute;
  top: 0;
  right: 0;
  width: 14px;
  height: 14px;
  border-radius: 50%;
  background-color: #dc2626;
  color: #fff;
  font-size: 11px;
  font-weight: 700;
  line-height: 14px;
}

.company {
  display: flex;
  align-items: center;
  gap: 3px;
}

.tag {
  display: inline-block;
  padding: 0 5px;
  border-radius: 2px;
  background-color: #fad6a0;
  font-size: 11px;
  line-height: 16px;
}

.row-actions {
  display: flex;
}

.pager {
  display: flex;
  align-items: center;
  justify-content: flex-end;
  gap: 16px;
  height: 48px;
  padding-right: 26px;
  border-top: 1px solid #e5e7eb;
}

.page-size {
  display: flex;
  align-items: center;
  gap: 6px;
  height: 31px;
  padding-left: 16px;
  border-left: 1px solid var(--line);
}

/* taskbar */
.taskbar {
  display: grid;
  grid-template-columns: 1fr auto 1fr;
  align-items: center;
  height: 49px;
  border-top: 1px solid #a9bdb5;
  background-color: #c8ecdd;
  color: #1b1b1b;
  font-size: 12px;
}

.weather {
  display: flex;
  align-items: center;
  gap: 6px;
  padding-left: 18px;
  line-height: 16px;
}

.weather svg {
  stroke: none;
}

.weather small {
  font-size: 12px;
  color: #444;
}

.dock {
  display: flex;
  align-items: center;
  gap: 6px;
}

.app-icon {
  width: 38px;
  height: 38px;
  border-radius: 4px;
}

.app-icon svg, .food svg {
  stroke: none;
}

.app-icon.running::after, .app-icon.current::after {
  content: "";
  position: absolute;
  bottom: 0;
  width: 6px;
  height: 3px;
  border-radius: 2px;
  background-color: #73857d;
}

.app-icon.current {
  background-color: #e4f5ee;
}

.app-icon.current::after {
  width: 16px;
  background-color: #0a78d6;
}

.task-search {
  display: flex;
  align-items: center;
  gap: 10px;
  width: 219px;
  height: 31px;
  padding: 0 5px 0 12px;
  border-radius: 16px;
  background-color: #eff9f5;
  box-shadow: 0 1px 1px #a3c4b7;
  font-size: 14px;
}

.task-search svg {
  width: 15px;
  height: 15px;
  stroke-width: 2;
}

.task-search .food svg {
  width: 46px;
  height: 26px;
}

.task-search input {
  flex: 1;
  min-width: 0;
}

.task-search input::placeholder {
  color: #4a4f4d;
  opacity: 1;
}

.tray {
  display: flex;
  align-items: center;
  justify-content: flex-end;
  gap: 14px;
  padding-right: 18px;
}

.devices {
  display: flex;
  align-items: center;
  gap: 6px;
  margin-left: 2px;
}

.ime {
  width: 24px;
  font-size: 15px;
  text-align: center;
}

time {
  text-align: right;
  line-height: 16px;
}
```
